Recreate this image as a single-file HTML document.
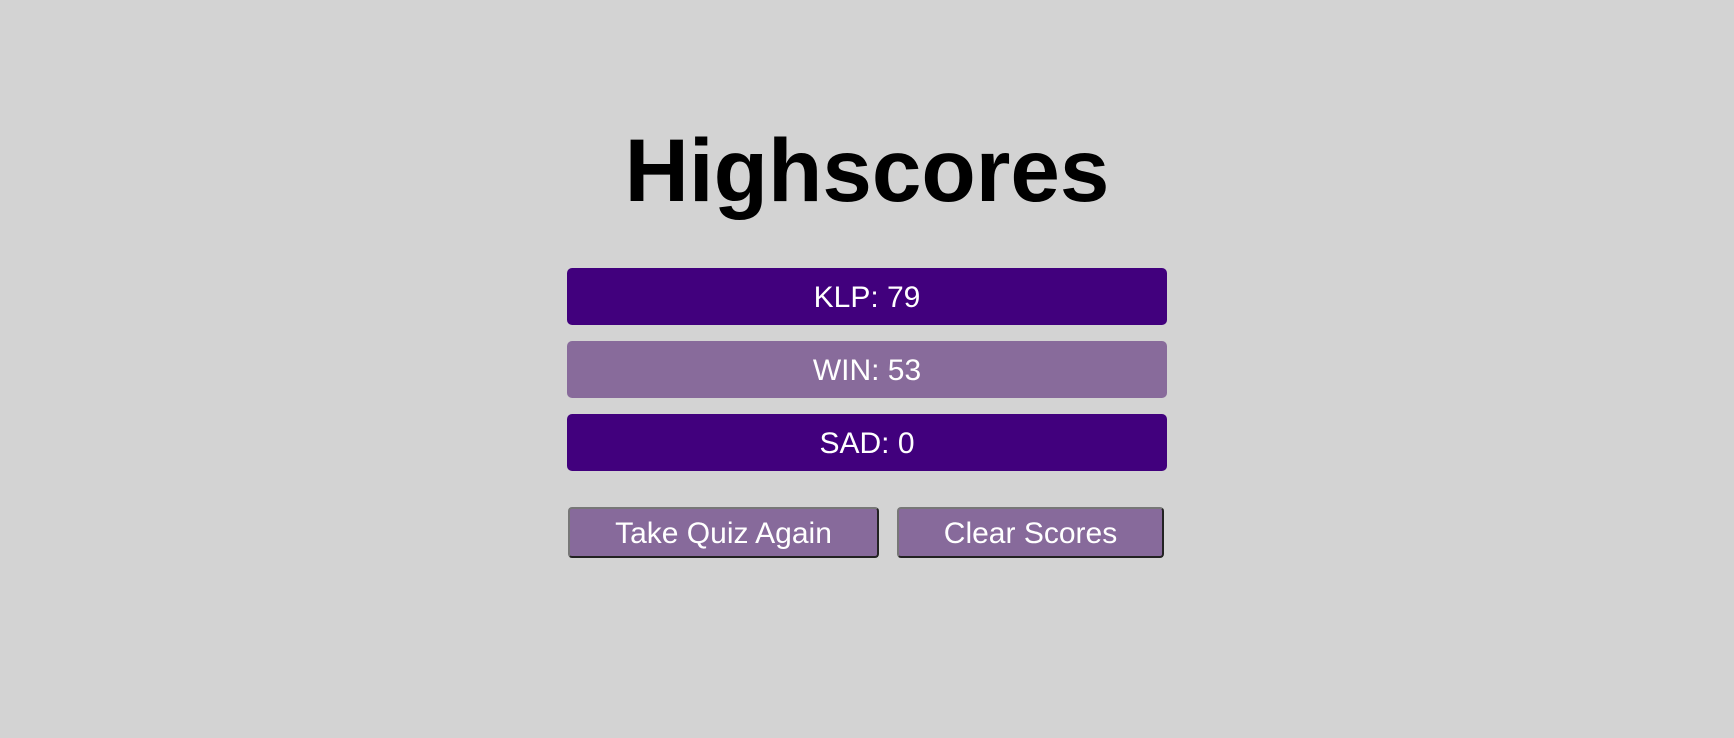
<!DOCTYPE html>
<html><head><style>
body{margin:0;width:1734px;height:738px;background:#d3d3d3;font-family:"Liberation Sans",Arial,sans-serif;position:relative;overflow:hidden}
h1{position:absolute;left:0;width:1734px;top:115px;margin:0;text-align:center;font-size:89px;line-height:110px;font-weight:bold;color:#000}
.row{position:absolute;left:567px;width:600px;height:57px;border-radius:5px;color:#fff;font-size:30px;line-height:59px;text-align:center;box-sizing:border-box}
.d{background:#41007d}.l{background:#886b9b}
.btn{position:absolute;top:507px;height:47px;background:#876a9b;color:#fff;font-size:30px;line-height:49px;text-align:center;border:2px solid;border-color:#777 #222 #222 #777;border-radius:4px;box-sizing:content-box}
</style></head><body>
<h1>Highscores</h1>
<div class="row d" style="top:268px">KLP: 79</div>
<div class="row l" style="top:341px">WIN: 53</div>
<div class="row d" style="top:414px">SAD: 0</div>
<div class="btn" style="left:568px;width:307px">Take Quiz Again</div>
<div class="btn" style="left:897px;width:263px">Clear Scores</div>
</body></html>
